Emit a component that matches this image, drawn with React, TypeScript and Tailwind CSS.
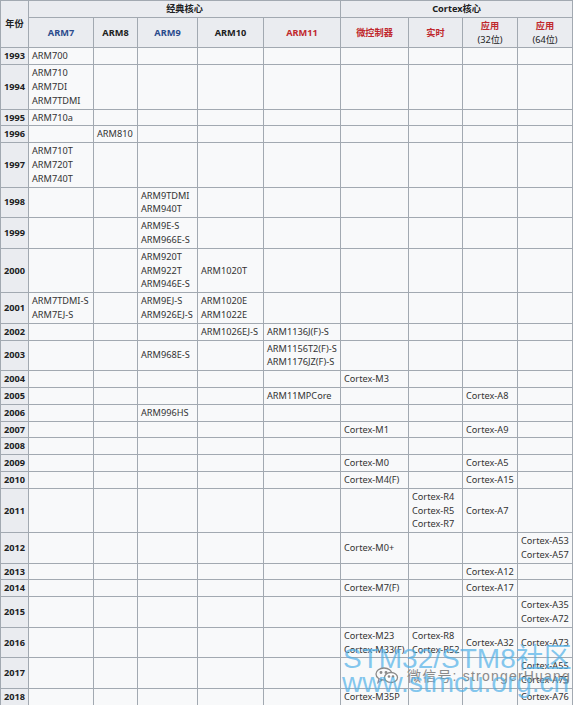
import React from "react";

// ARM7, ARM8, ARM9, ARM10, ARM11, MCU, RT, A32, A64
type Row = { year: string; cells: string[] };

const rows: Row[] = [
  { year: "1993", cells: ["ARM700", "", "", "", "", "", "", "", ""] },
  { year: "1994", cells: ["ARM710\nARM7DI\nARM7TDMI", "", "", "", "", "", "", "", ""] },
  { year: "1995", cells: ["ARM710a", "", "", "", "", "", "", "", ""] },
  { year: "1996", cells: ["", "ARM810", "", "", "", "", "", "", ""] },
  { year: "1997", cells: ["ARM710T\nARM720T\nARM740T", "", "", "", "", "", "", "", ""] },
  { year: "1998", cells: ["", "", "ARM9TDMI\nARM940T", "", "", "", "", "", ""] },
  { year: "1999", cells: ["", "", "ARM9E-S\nARM966E-S", "", "", "", "", "", ""] },
  { year: "2000", cells: ["", "", "ARM920T\nARM922T\nARM946E-S", "ARM1020T", "", "", "", "", ""] },
  {
    year: "2001",
    cells: ["ARM7TDMI-S\nARM7EJ-S", "", "ARM9EJ-S\nARM926EJ-S", "ARM1020E\nARM1022E", "", "", "", "", ""],
  },
  { year: "2002", cells: ["", "", "", "ARM1026EJ-S", "ARM1136J(F)-S", "", "", "", ""] },
  { year: "2003", cells: ["", "", "ARM968E-S", "", "ARM1156T2(F)-S\nARM1176JZ(F)-S", "", "", "", ""] },
  { year: "2004", cells: ["", "", "", "", "", "Cortex-M3", "", "", ""] },
  { year: "2005", cells: ["", "", "", "", "ARM11MPCore", "", "", "Cortex-A8", ""] },
  { year: "2006", cells: ["", "", "ARM996HS", "", "", "", "", "", ""] },
  { year: "2007", cells: ["", "", "", "", "", "Cortex-M1", "", "Cortex-A9", ""] },
  { year: "2008", cells: ["", "", "", "", "", "", "", "", ""] },
  { year: "2009", cells: ["", "", "", "", "", "Cortex-M0", "", "Cortex-A5", ""] },
  { year: "2010", cells: ["", "", "", "", "", "Cortex-M4(F)", "", "Cortex-A15", ""] },
  { year: "2011", cells: ["", "", "", "", "", "", "Cortex-R4\nCortex-R5\nCortex-R7", "Cortex-A7", ""] },
  { year: "2012", cells: ["", "", "", "", "", "Cortex-M0+", "", "", "Cortex-A53\nCortex-A57"] },
  { year: "2013", cells: ["", "", "", "", "", "", "", "Cortex-A12", ""] },
  { year: "2014", cells: ["", "", "", "", "", "Cortex-M7(F)", "", "Cortex-A17", ""] },
  { year: "2015", cells: ["", "", "", "", "", "", "", "", "Cortex-A35\nCortex-A72"] },
  {
    year: "2016",
    cells: ["", "", "", "", "", "Cortex-M23\nCortex-M33(F)", "Cortex-R8\nCortex-R52", "Cortex-A32", "Cortex-A73"],
  },
  { year: "2017", cells: ["", "", "", "", "", "", "", "", "Cortex-A55\nCortex-A75"] },
  { year: "2018", cells: ["", "", "", "", "", "Cortex-M35P", "", "", "Cortex-A76"] },
];

const widths = [28, 65, 44, 60, 66, 77, 68, 54, 55, 55];

const th = "border border-[#a2a9b1] bg-[#eaecf0] px-[3px] py-px text-center font-bold text-[#202122]";
const td =
  "border border-[#a2a9b1] bg-[#f8f9fa] px-[3px] py-px text-left align-middle whitespace-pre overflow-visible text-[#333]";

function WeChatIcon() {
  return (
    <svg width="24" height="17" viewBox="0 0 24 17" fill="none" stroke="#8a8a8a" strokeWidth="1.3">
      <ellipse cx="9" cy="7" rx="8" ry="6" />
      <path d="M4 12 L3 15.5 L7 13" />
      <ellipse cx="16" cy="10.5" rx="6.5" ry="5" fill="white" />
      <circle cx="6" cy="5.5" r="0.8" fill="#8a8a8a" />
      <circle cx="11" cy="5.5" r="0.8" fill="#8a8a8a" />
      <circle cx="14" cy="9.5" r="0.7" fill="#8a8a8a" />
      <circle cx="18" cy="9.5" r="0.7" fill="#8a8a8a" />
    </svg>
  );
}

export default function App() {
  return (
    <div className="relative h-[705px] w-[574px] overflow-hidden bg-white font-['Noto_Sans','Noto_Sans_CJK_SC',sans-serif] text-[9.2px] leading-[13.8px]">
      <table className="w-[573px] table-fixed border-collapse">
        <colgroup>
          {widths.map((w, i) => (
            <col key={i} style={{ width: w }} />
          ))}
        </colgroup>
        <thead>
          <tr>
            <th rowSpan={2} className={th}>
              年份
            </th>
            <th colSpan={5} className={th}>
              经典核心
            </th>
            <th colSpan={4} className={th}>
              Cortex核心
            </th>
          </tr>
          <tr>
            <th className={`${th} !text-[#2a4b8d]`}>ARM7</th>
            <th className={th}>ARM8</th>
            <th className={`${th} !text-[#2a4b8d]`}>ARM9</th>
            <th className={th}>ARM10</th>
            <th className={`${th} !text-[#c0282d]`}>ARM11</th>
            <th className={`${th} !text-[#c0282d]`}>微控制器</th>
            <th className={`${th} !text-[#c0282d]`}>实时</th>
            <th className={th}>
              <span className="text-[#c0282d]">应用</span>
              <br />
              <span className="font-normal">(32位)</span>
            </th>
            <th className={th}>
              <span className="text-[#c0282d]">应用</span>
              <br />
              <span className="font-normal">(64位)</span>
            </th>
          </tr>
        </thead>
        <tbody>
          {rows.map((r) => (
            <tr key={r.year}>
              <th className={th}>{r.year}</th>
              {r.cells.map((c, i) => (
                <td key={i} className={td}>
                  {c}
                </td>
              ))}
            </tr>
          ))}
        </tbody>
      </table>

      {/* watermark */}
      <div className="pointer-events-none absolute left-[343px] top-[645px] font-['Liberation_Sans','Noto_Sans_CJK_SC',sans-serif] text-[28px] leading-[28px] text-[#4fb0e8]/70">
        STM32/STM8社区
      </div>
      <div className="pointer-events-none absolute left-[375px] top-[667px] flex items-center gap-[8px] font-['Liberation_Sans','Noto_Sans_CJK_SC',sans-serif] text-[14px] leading-[16px] tracking-[1.2px] text-[#8a8a8a]">
        <WeChatIcon />
        <span>微信号: strongerHuang</span>
      </div>
      <div className="pointer-events-none absolute left-[342px] top-[669px] font-['Liberation_Sans',sans-serif] text-[28px] leading-[28px] text-[#4fb0e8]/70">
        www.stmcu.org.cn
      </div>
    </div>
  );
}
